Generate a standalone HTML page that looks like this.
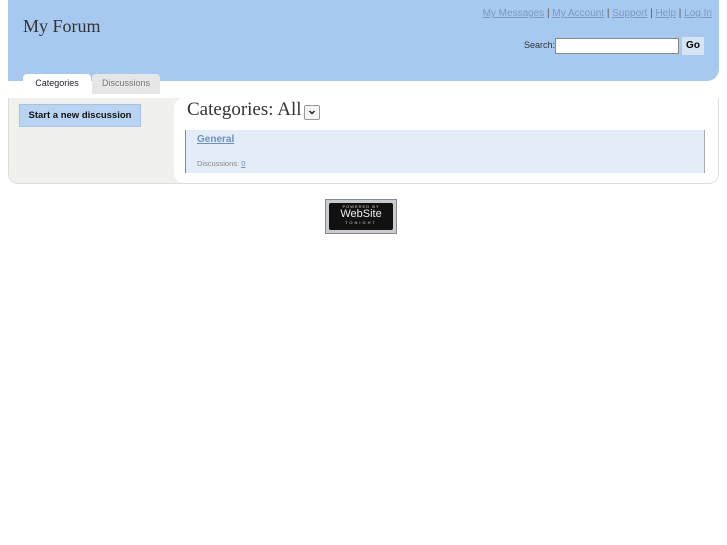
<!DOCTYPE html>
<html><head><style>
body{margin:0;background:#fff;font-family:"Liberation Sans",sans-serif;width:727px;height:545px;position:relative;overflow:hidden}
.hdr{position:absolute;left:8px;top:0;width:711px;height:81px;background:#a7c9ef;border-radius:0 0 12px 0}
.title{position:absolute;left:23px;top:16px;font-family:"Liberation Serif",serif;font-size:18px;color:#333}
.links{position:absolute;right:15px;top:8px;font-size:10px;color:#555}
.links a{color:#7d98c4;text-decoration:underline}
.search{position:absolute;left:524px;top:40px;font-size:9px;color:#333}
.inp{position:absolute;left:555px;top:38px;width:124px;height:16px;background:#fff;border:1px solid #888;box-sizing:border-box}
.go{position:absolute;left:682px;top:37px;width:22px;height:18px;background:#d6e4f4;font-size:10px;font-weight:bold;text-align:center;line-height:18px}
.tab{position:absolute;top:74px;height:20px;font-size:9px;text-align:center;line-height:19px;border-radius:4px 4px 0 0}
.panel{position:absolute;left:8px;top:98px;width:709px;height:85px;border:1px solid #ddd;border-top:none;border-radius:0 0 10px 10px;background:#f0f0ec;overflow:hidden}
.main{position:absolute;left:165px;top:0;right:0;bottom:0;background:#fff;border-radius:10px 0 0 10px}
.btn{position:absolute;left:10px;top:6px;width:120px;height:21px;background:#b9d4f2;border:1px solid #a9c1e0;font-size:9.5px;font-weight:bold;line-height:21px;text-align:center;color:#111}
.h{position:absolute;left:13px;top:1px;font-family:"Liberation Serif",serif;font-size:19px;color:#333}
.dd{position:absolute;left:130px;top:7px;width:14px;height:13px;border:1px solid #999;border-radius:2px;background:#f4f4f4}
.cat{position:absolute;left:11px;top:32px;width:518px;height:43px;background:#e3edf8;border-left:1px solid #888;border-right:1px solid #aaa}
.cat a{color:#6f8fc0;text-decoration:underline}
</style></head><body>
<div class="hdr"></div>
<div class="title">My Forum</div>
<div class="links"><a>My Messages</a> | <a>My Account</a> | <a>Support</a> | <a>Help</a> | <a>Log In</a></div>
<div class="search">Search:</div>
<div class="inp"></div>
<div class="go">Go</div>
<div class="tab" style="left:23px;width:68px;background:#fff;color:#223">Categories</div>
<div class="tab" style="left:92px;width:68px;background:#e6e6e6;color:#777">Discussions</div>
<div class="panel">
<div class="btn">Start a new discussion</div>
<div class="main">
<div class="h">Categories: All</div>
<div class="dd"><svg width="14" height="13"><path d="M4.5 5 L7 7.5 L9.5 5" stroke="#222" stroke-width="1.5" fill="none"/></svg></div>
<div class="cat">
<a style="position:absolute;left:11px;top:4px;font-size:10px;font-weight:bold">General</a>
<div style="position:absolute;left:11px;top:29px;font-size:7.5px;color:#888">Discussions: <a>0</a></div>
</div>
</div>
</div>
<div style="position:absolute;left:325px;top:199px;width:72px;height:35px;background:#c8ccd0;border:1px solid #888;box-sizing:border-box">
<div style="position:absolute;left:3px;top:3px;right:3px;bottom:3px;background:#111;border-radius:2px;color:#ddd;text-align:center">
<div style="font-size:4px;letter-spacing:1px;margin-top:1px">POWERED BY</div>
<div style="font-size:11px;line-height:11px;color:#eee">WebSite</div>
<div style="font-size:4px;letter-spacing:2px">TONIGHT</div>
</div></div>
</body></html>
